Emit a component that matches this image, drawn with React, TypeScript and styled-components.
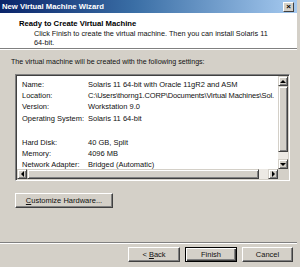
import React from 'react';
import styled, { createGlobalStyle } from 'styled-components';

const GlobalStyle = createGlobalStyle`
  html, body {
    margin: 0;
    padding: 0;
    background: #d4d0c8;
  }
  body {
    font-family: 'Liberation Sans', Arial, sans-serif;
    color: #111;
  }
`;

const Window = styled.div`
  width: 300px;
  height: 267px;
  box-sizing: border-box;
  border-right: 3px solid #d4d0c8;
  background: #d4d0c8;
  display: flex;
  flex-direction: column;
  overflow: hidden;
`;

const TitleBar = styled.div`
  height: 13px;
  flex: none;
  display: flex;
  align-items: center;
  justify-content: space-between;
  padding: 0 3px 0 2px;
  background: linear-gradient(90deg, #0a246a 0%, #3a6ea5 45%, #a6caf0 100%);
`;

const TitleText = styled.span`
  color: #fff;
  font-weight: bold;
  font-size: 7.7px;
  line-height: 13px;
`;

const CloseButton = styled.div`
  width: 11px;
  height: 10px;
  box-sizing: border-box;
  background: #d4d0c8;
  border: 1px solid;
  border-color: #fff #404040 #404040 #fff;
  display: flex;
  align-items: center;
  justify-content: center;
  font-size: 8px;
  font-weight: bold;
  line-height: 1;
  color: #000;
`;

const Header = styled.div`
  height: 35px;
  flex: none;
  background: #fff;
  padding: 6px 0 0 19px;
  box-sizing: border-box;
`;

const HeaderTitle = styled.div`
  font-weight: bold;
  font-size: 7.7px;
  line-height: 10px;
  color: #000;
`;

const HeaderDesc = styled.div`
  font-size: 7.3px;
  line-height: 9px;
  padding-left: 15px;
  width: 240px;
`;

const Etched = styled.div`
  flex: none;
  height: 0;
  border-top: 1px solid #808080;
  border-bottom: 1px solid #fff;
`;

const Body = styled.div`
  flex: 1;
  display: flex;
  flex-direction: column;
  align-items: flex-start;
  padding: 7px 7px 0 11px;
`;

const Intro = styled.div`
  font-size: 7.1px;
  line-height: 10px;
`;

const ListBox = styled.div`
  margin: 7px 0 0 4px;
  width: 275px;
  height: 107px;
  box-sizing: border-box;
  border: 1px solid;
  border-color: #808080 #fff #fff #808080;
  box-shadow: inset 1px 1px #404040, inset -1px -1px #d4d0c8;
  padding: 1px;
  display: grid;
  grid-template-columns: 1fr 10px;
  grid-template-rows: 1fr 10px;
  background: #fff;
`;

const ListContent = styled.div`
  overflow: hidden;
  padding: 3px 0 0 5px;
`;

const Row = styled.div<{ $gap?: boolean; $tight?: boolean }>`
  display: flex;
  font-size: 7.5px;
  line-height: 11.2px;
  white-space: nowrap;
  margin-top: ${p => (p.$gap ? '13px' : '0')};
  letter-spacing: ${p => (p.$tight ? '-0.13px' : 'normal')};
`;

const Label = styled.span`
  width: 66px;
  flex: none;
  letter-spacing: normal;
`;

const VScroll = styled.div`
  display: flex;
  flex-direction: column;
  background: #ece9e4;
`;

const HScroll = styled.div`
  display: flex;
  background: #ece9e4;
`;

const ScrollBtn = styled.div`
  flex: none;
  width: 10px;
  height: 10px;
  box-sizing: border-box;
  background: #d4d0c8;
  border: 1px solid;
  border-color: #d4d0c8 #404040 #404040 #d4d0c8;
  box-shadow: inset 1px 1px #fff, inset -1px -1px #808080;
  display: flex;
  align-items: center;
  justify-content: center;
`;

const Thumb = styled.div<{ $size: string; $vertical?: boolean }>`
  box-sizing: border-box;
  background: #d4d0c8;
  border: 1px solid;
  border-color: #d4d0c8 #404040 #404040 #d4d0c8;
  box-shadow: inset 1px 1px #fff, inset -1px -1px #808080;
  ${p => (p.$vertical ? `height: ${p.$size}; width: 10px;` : `width: ${p.$size}; height: 10px;`)}
  flex: none;
`;

const Track = styled.div`
  flex: 1;
`;

const Corner = styled.div`
  background: #d4d0c8;
`;

const Arrow = styled.span<{ $dir: 'up' | 'down' | 'left' | 'right' }>`
  width: 0;
  height: 0;
  border-style: solid;
  ${p =>
    p.$dir === 'up'
      ? 'border-width: 0 3px 3px 3px; border-color: transparent transparent #000 transparent;'
      : p.$dir === 'down'
      ? 'border-width: 3px 3px 0 3px; border-color: #000 transparent transparent transparent;'
      : p.$dir === 'left'
      ? 'border-width: 3px 3px 3px 0; border-color: transparent #000 transparent transparent;'
      : 'border-width: 3px 0 3px 3px; border-color: transparent transparent transparent #000;'}
`;

const Button = styled.button<{ $default?: boolean; $width: number }>`
  width: ${p => p.$width}px;
  height: 15px;
  padding: 0;
  box-sizing: border-box;
  background: #d4d0c8;
  font-family: 'Liberation Sans', Arial, sans-serif;
  font-size: 7.5px;
  color: #111;
  border: 1px solid;
  border-color: ${p => (p.$default ? '#000' : '#fff #404040 #404040 #fff')};
  box-shadow: ${p =>
    p.$default
      ? 'inset 1px 1px #fff, inset -1px -1px #404040, inset -2px -2px #808080'
      : 'inset -1px -1px #808080'};
  display: flex;
  align-items: center;
  justify-content: center;
`;

const CustomizeButton = styled(Button)`
  margin: 12px 0 0 4px;
`;

const Footer = styled.div`
  flex: none;
  height: 23px;
  box-sizing: border-box;
  padding: 3px 4px 0 0;
  display: flex;
  justify-content: flex-end;
  gap: 5px;
`;

const rows: [string, string][] = [
  ['Name:', 'Solaris 11 64-bit with Oracle 11gR2 and ASM'],
  ['Location:', 'C:\\Users\\thorng1.CORP\\Documents\\Virtual Machines\\Sol.'],
  ['Version:', 'Workstation 9.0'],
  ['Operating System:', 'Solaris 11 64-bit'],
];

const hardware: [string, string][] = [
  ['Hard Disk:', '40 GB, Split'],
  ['Memory:', '4096 MB'],
  ['Network Adapter:', 'Bridged (Automatic)'],
];

export default function App() {
  return (
    <>
      <GlobalStyle />
      <Window>
        <TitleBar>
          <TitleText>New Virtual Machine Wizard</TitleText>
          <CloseButton>×</CloseButton>
        </TitleBar>
        <Header>
          <HeaderTitle>Ready to Create Virtual Machine</HeaderTitle>
          <HeaderDesc>
            Click Finish to create the virtual machine. Then you can install Solaris 11 64-bit.
          </HeaderDesc>
        </Header>
        <Etched />
        <Body>
          <Intro>The virtual machine will be created with the following settings:</Intro>
          <ListBox>
            <ListContent>
              {rows.map(([k, v]) => (
                <Row key={k} $tight={k === 'Location:'}>
                  <Label>{k}</Label>
                  <span>{v}</span>
                </Row>
              ))}
              {hardware.map(([k, v], i) => (
                <Row key={k} $gap={i === 0}>
                  <Label>{k}</Label>
                  <span>{v}</span>
                </Row>
              ))}
            </ListContent>
            <VScroll>
              <ScrollBtn>
                <Arrow $dir="up" />
              </ScrollBtn>
              <Thumb $vertical $size="66px" />
              <Track />
              <ScrollBtn>
                <Arrow $dir="down" />
              </ScrollBtn>
            </VScroll>
            <HScroll>
              <ScrollBtn>
                <Arrow $dir="left" />
              </ScrollBtn>
              <Thumb $size="232px" />
              <Track />
              <ScrollBtn>
                <Arrow $dir="right" />
              </ScrollBtn>
            </HScroll>
            <Corner />
          </ListBox>
          <CustomizeButton $width={98}>
            <span>
              <u>C</u>ustomize Hardware...
            </span>
          </CustomizeButton>
        </Body>
        <Etched />
        <Footer>
          <Button $width={52}>
            <span>
              &lt; <u>B</u>ack
            </span>
          </Button>
          <Button $width={52} $default>
            Finish
          </Button>
          <Button $width={51}>Cancel</Button>
        </Footer>
      </Window>
    </>
  );
}
